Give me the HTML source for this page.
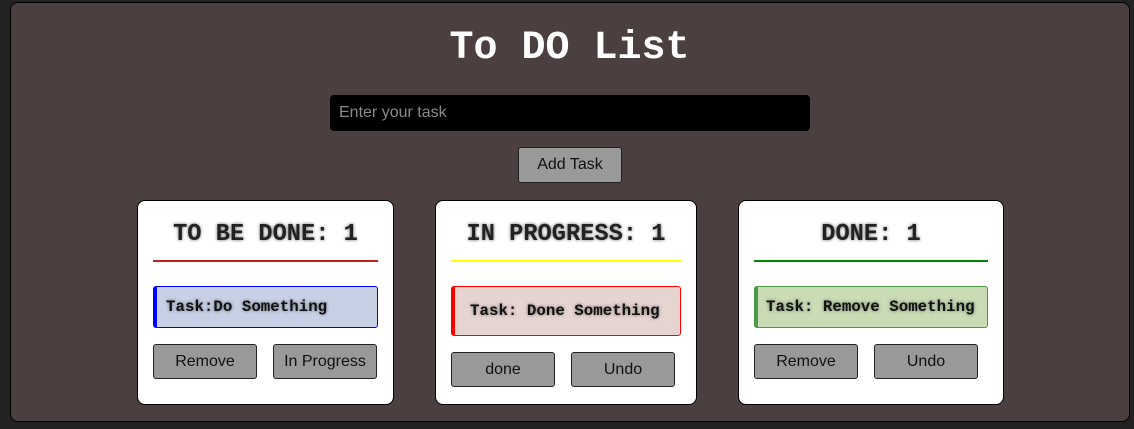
<!DOCTYPE html>
<html><head><style>
*{box-sizing:border-box;margin:0;padding:0}
body{width:1134px;height:429px;background:#222;position:relative;overflow:hidden;font-family:"Liberation Sans",sans-serif}
.c{position:absolute;left:10px;top:2px;width:1120px;height:420px;background:#4b3f3f;border:1px solid #000;border-radius:8px}
.a{position:absolute}
h1{position:absolute;left:0;width:1139px;top:27px;text-align:center;font:bold 40px "Liberation Mono",monospace;color:#fff;line-height:44px}
.in{left:330px;top:95px;width:480px;height:36px;background:#000;border-radius:4px;color:#8a8a8a;font-size:16px;line-height:36px;padding-left:9px}
.btn{position:absolute;background:#999;border:1px solid #222;border-radius:3px;font-size:16px;color:#111;text-align:center;line-height:33px;height:35px;width:104px}
.card{position:absolute;top:200px;height:205px;background:#fff;border:1px solid #000;border-radius:8px}
.h{position:absolute;left:0;right:0;top:20px;text-align:center;font:bold 23.7px "Liberation Mono",monospace;color:#222;text-shadow:0 0 3px rgba(0,0,0,.6);line-height:28px}
.ln{position:absolute;height:2px}
.t{position:absolute;border-radius:3px;font:bold 15.8px "Liberation Mono",monospace;color:#111;text-shadow:0 0 3px rgba(0,0,0,.5);padding-left:9px;white-space:nowrap}
</style></head><body>
<div class="c"></div>
<h1>To DO List</h1>
<div class="a in">Enter your task</div>
<div class="btn" style="left:518px;top:147px;height:36px;line-height:34px">Add Task</div>

<div class="card" style="left:137px;width:257px">
 <div class="h">TO BE DONE: 1</div>
 <div class="ln" style="left:15px;width:225px;top:59px;background:#b22"></div>
 <div class="t" style="left:15px;top:85px;width:225px;height:42px;background:#c7d0e5;border:1px solid #00f;border-left:4px solid #00f;line-height:41px">Task:Do Something</div>
 <div class="btn" style="left:15px;top:143px">Remove</div>
 <div class="btn" style="left:135px;top:143px">In Progress</div>
</div>

<div class="card" style="left:435px;width:262px">
 <div class="h">IN PROGRESS: 1</div>
 <div class="ln" style="left:15px;width:230px;top:59px;background:#ff0"></div>
 <div class="t" style="left:15px;top:85px;width:230px;height:50px;background:#e6d4d1;border:1px solid #f00;border-left:4px solid #f00;line-height:49px;padding-left:15px">Task: Done Something</div>
 <div class="btn" style="left:15px;top:151px">done</div>
 <div class="btn" style="left:135px;top:151px">Undo</div>
</div>

<div class="card" style="left:738px;width:266px">
 <div class="h">DONE: 1</div>
 <div class="ln" style="left:15px;width:234px;top:59px;background:#080"></div>
 <div class="t" style="left:15px;top:85px;width:234px;height:42px;background:#c9dcb5;border:1px solid #4a9a4a;border-left:4px solid #4a9a4a;line-height:40px;padding-left:8px">Task: Remove Something</div>
 <div class="btn" style="left:15px;top:143px">Remove</div>
 <div class="btn" style="left:135px;top:143px">Undo</div>
</div>
</body></html>
